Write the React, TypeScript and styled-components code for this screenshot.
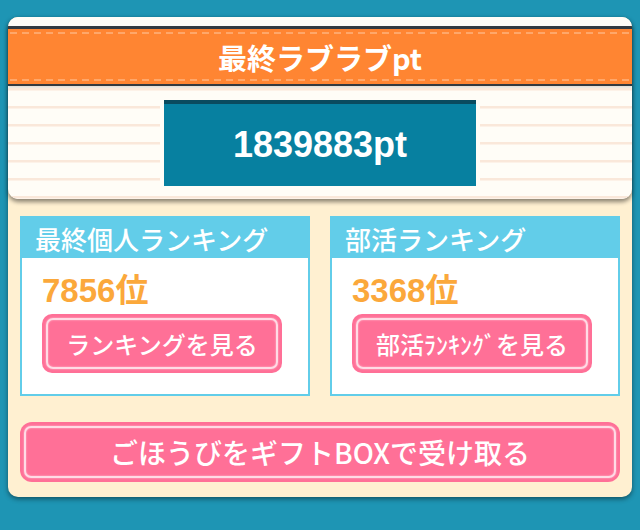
import React from 'react';
import styled, { createGlobalStyle } from 'styled-components';

const GlobalStyle = createGlobalStyle`
  html, body {
    margin: 0;
    padding: 0;
    background-color: #1e95b4;
  }
  body {
    font-family: "Liberation Sans", "Noto Sans CJK JP", sans-serif;
  }
  * {
    box-sizing: border-box;
  }
`;

const Page = styled.div`
  width: 640px;
  height: 530px;
  padding: 17px 8px 0;
`;

const Card = styled.div`
  background-color: #fff0d1;
  border-radius: 10px;
  box-shadow: 0 2px 5px rgba(0, 0, 0, 0.45);
  padding-bottom: 15px;
`;

const TopCard = styled.div`
  background-color: #fffdf7;
  border-radius: 10px;
  box-shadow: 0 3px 4px rgba(0, 0, 0, 0.45);
  padding-top: 9px;
  overflow: hidden;
`;

const stitch = 'repeating-linear-gradient(90deg, #ffa76a 0 7px, transparent 7px 12px)';

const Header = styled.h1`
  margin: 0;
  height: 60px;
  border-top: 3px solid #333a40;
  border-bottom: 2px solid #333a40;
  background:
    ${stitch} 2px 3px / 100% 2px no-repeat,
    ${stitch} 2px calc(100% - 3px) / 100% 2px no-repeat,
    #ff8532;
  box-shadow: 0 2px 2px rgba(0, 0, 0, 0.12);
  display: flex;
  align-items: center;
  justify-content: center;
  color: #ffffff;
  font-family: "Noto Sans CJK JP", sans-serif;
  font-size: 29px;
  font-weight: 700;
`;

const Stripes = styled.div`
  display: flex;
  justify-content: center;
  padding: 14px 0 4px;
  background: repeating-linear-gradient(
    180deg,
    transparent 0 2px,
    #fae8da 2px 4px,
    #fdf2e8 4px 5px,
    transparent 5px 18px
  );
`;

const ScoreFrame = styled.div`
  width: 320px;
  padding: 0 4px 9px;
  background-color: #fffdf7;
`;

const ScoreBox = styled.div`
  height: 86px;
  border-top: 4px solid #0a4b5f;
  background-color: #0780a0;
  display: flex;
  align-items: center;
  justify-content: center;
  color: #ffffff;
  font-size: 36px;
  font-weight: 700;
`;

const Body = styled.div`
  padding: 17px 12px 0;
`;

const PanelGrid = styled.div`
  display: grid;
  grid-template-columns: 1fr 1fr;
  gap: 20px;
`;

const Panel = styled.section`
  height: 180px;
  border: 2px solid #62cde9;
  background-color: #ffffff;
`;

const PanelTitle = styled.h2`
  margin: 0;
  height: 40px;
  background-color: #62cde9;
  padding-left: 13px;
  display: flex;
  align-items: center;
  color: #ffffff;
  font-size: 26px;
  font-weight: 500;
`;

const PanelBody = styled.div`
  padding: 15px 0 0 20px;
`;

const Rank = styled.div`
  color: #fba83b;
  font-size: 33px;
  font-weight: 700;
  line-height: 35px;
`;

const PinkButton = styled.button<{ $width: number; $height: number; $size: number }>`
  position: relative;
  width: ${({ $width }) => $width}px;
  height: ${({ $height }) => $height}px;
  border: none;
  border-radius: 10px;
  background-color: #ff7097;
  color: #ffffff;
  font-family: "Noto Sans CJK JP", sans-serif;
  font-size: ${({ $size }) => $size}px;
  font-weight: 500;
  padding: 0;
  display: flex;
  align-items: center;
  justify-content: center;
  cursor: pointer;

  &::after {
    content: '';
    position: absolute;
    inset: 4px;
    border: 2px solid rgba(255, 255, 255, 0.75);
    border-radius: 7px;
    box-shadow: 0 0 2px rgba(255, 255, 255, 0.6), inset 0 0 2px rgba(255, 255, 255, 0.6);
    pointer-events: none;
  }
`;

const SmallButton = styled(PinkButton)`
  margin-top: 6px;
`;

const RewardButton = styled(PinkButton)`
  margin-top: 26px;
  border-radius: 12px;
`;

const rankings = [
  { id: 'personal', title: '最終個人ランキング', rank: 7856, label: 'ランキングを見る' },
  { id: 'club', title: '部活ランキング', rank: 3368, label: '部活ﾗﾝｷﾝｸﾞを見る' },
];

const App: React.FC = () => {
  return (
    <>
      <GlobalStyle />
      <Page>
        <Card>
          <TopCard>
            <Header>最終ラブラブpt</Header>
            <Stripes>
              <ScoreFrame>
                <ScoreBox>1839883pt</ScoreBox>
              </ScoreFrame>
            </Stripes>
          </TopCard>

          <Body>
            <PanelGrid>
              {rankings.map(item => (
                <Panel key={item.id}>
                  <PanelTitle>{item.title}</PanelTitle>
                  <PanelBody>
                    <Rank>{item.rank}位</Rank>
                    <SmallButton $width={240} $height={59} $size={24}>
                      {item.label}
                    </SmallButton>
                  </PanelBody>
                </Panel>
              ))}
            </PanelGrid>
            <RewardButton $width={600} $height={60} $size={28}>
              ごほうびをギフトBOXで受け取る
            </RewardButton>
          </Body>
        </Card>
      </Page>
    </>
  );
};

export default App;
